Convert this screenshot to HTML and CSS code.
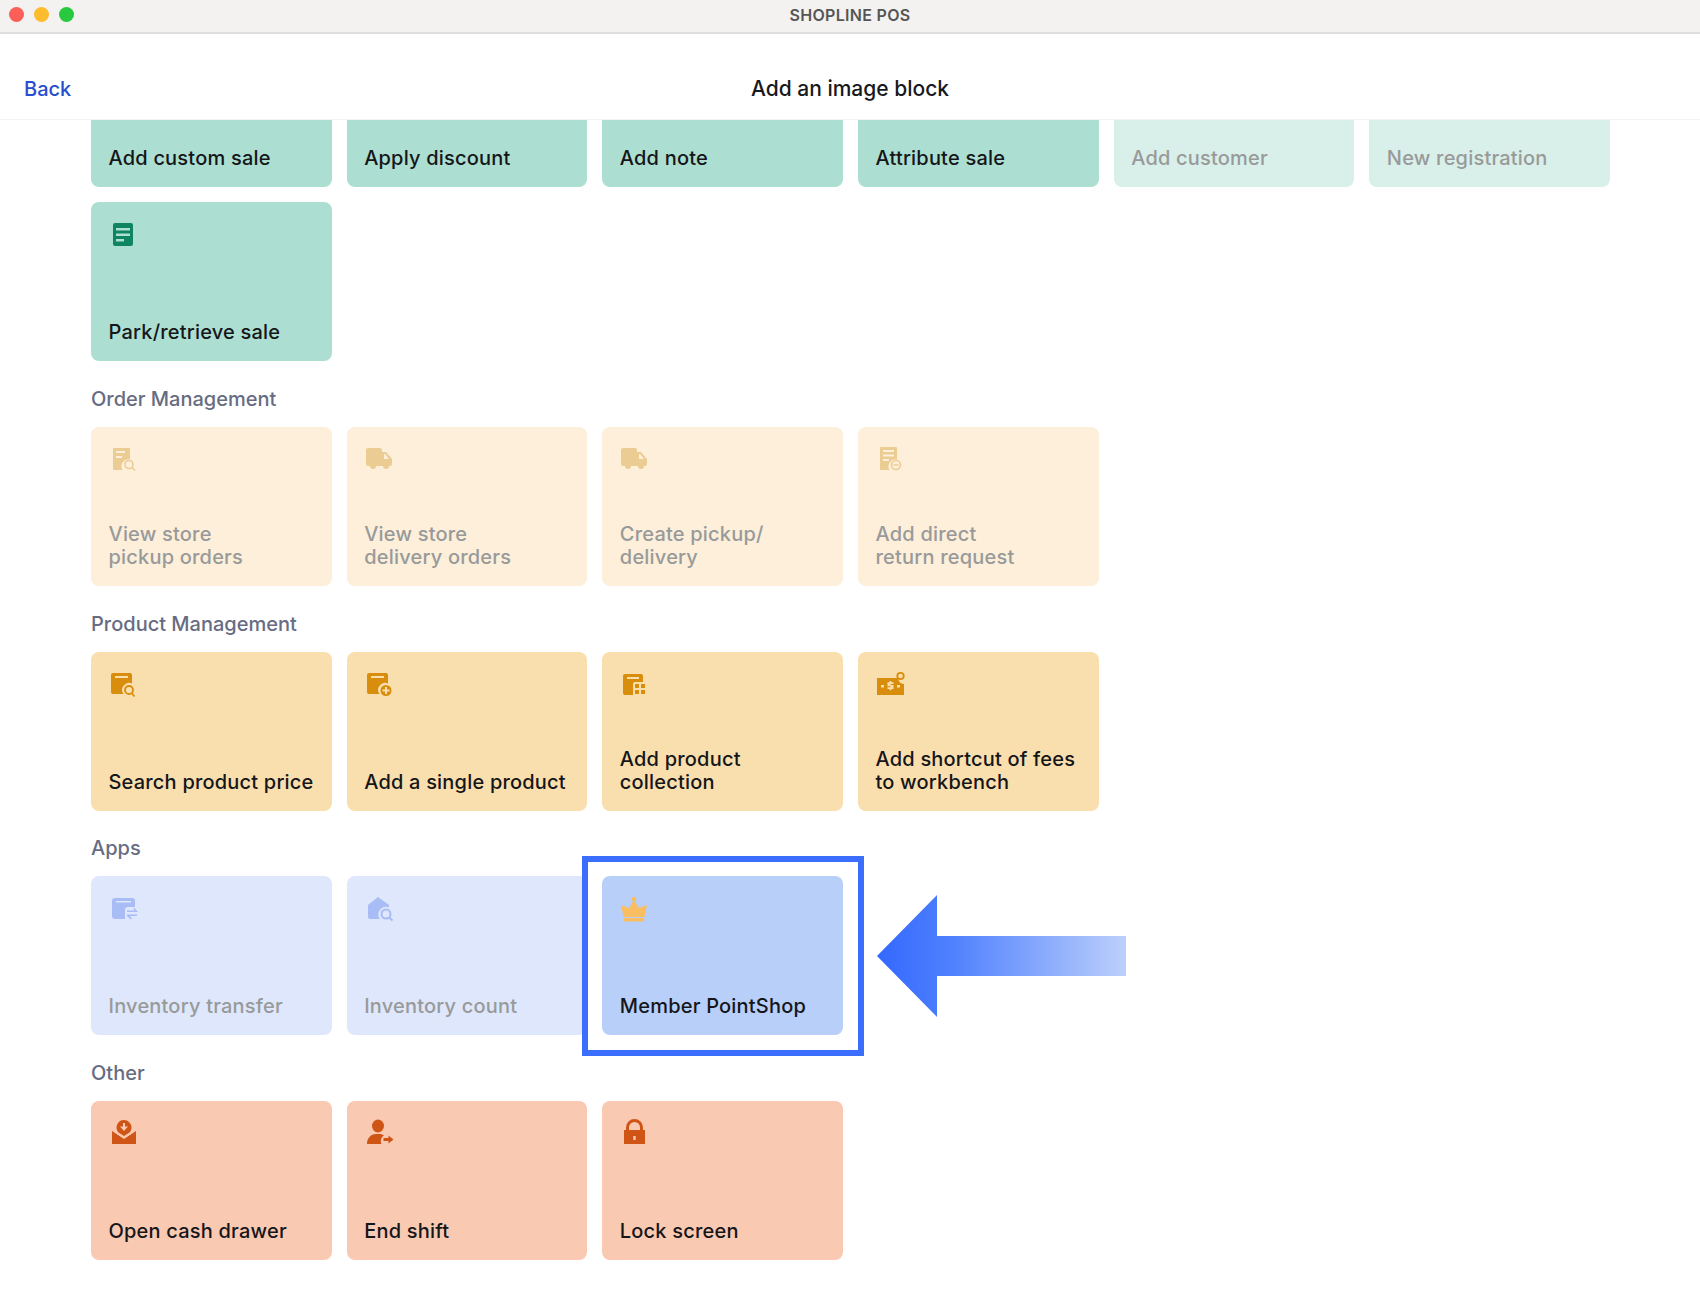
FILE: index.html
```html
<!DOCTYPE html>
<html lang="en">
<head>
<meta charset="utf-8">
<title>SHOPLINE POS</title>
<link rel="stylesheet" href="styles.css">
</head>
<body>
<div class="window">
  <div class="titlebar">
    <div class="lights"><span class="light red"></span><span class="light amber"></span><span class="light green"></span></div>
    <div class="app-name">SHOPLINE POS</div>
    <div></div>
  </div>
  <header class="nav">
    <a class="back">Back</a>
    <h1 class="nav-title">Add an image block</h1>
    <div></div>
  </header>
  <main class="scroller">
    <div class="content">
      <section class="group first">
        <div class="grid">
          <div class="card teal"><span class="text">Add custom sale</span></div>
          <div class="card teal"><span class="text">Apply discount</span></div>
          <div class="card teal"><span class="text">Add note</span></div>
          <div class="card teal"><span class="text">Attribute sale</span></div>
          <div class="card teal off"><span class="text">Add customer</span></div>
          <div class="card teal off"><span class="text">New registration</span></div>
          <div class="card teal">
            <svg class="icon" viewBox="0 0 32 32"><path fill-rule="evenodd" d="M7 5h16a2 2 0 0 1 2 2v19a2 2 0 0 1-2 2H7a2 2 0 0 1-2-2V7a2 2 0 0 1 2-2zm1 5v2.500h14V10zm0 5.500V18h14v-2.500zm0 5.500v2.500h8V21z"/></svg>
            <span class="text">Park/retrieve sale</span>
          </div>
        </div>
      </section>

      <section class="group">
        <h2 class="label">Order Management</h2>
        <div class="grid">
          <div class="card cream off">
            <svg class="icon" viewBox="0 0 32 32"><path fill-rule="evenodd" d="M6 5h15a1 1 0 0 1 1 1v10.500a7 7 0 0 0-7.500 10.500H6a1 1 0 0 1-1-1V6a1 1 0 0 1 1-1zm2 3v2h9V8zm0 5v2h6v-2z"/><path fill="none" stroke="currentColor" stroke-width="1.600" d="M21 17.500a4 4 0 1 1 0 8 4 4 0 0 1 0-8zm3 7 3 3"/></svg>
            <span class="text">View store<br>pickup orders</span>
          </div>
          <div class="card cream off">
            <svg class="icon" viewBox="0 0 32 32"><path d="M4 5h12a2 2 0 0 1 2 2v2h4l6 7v5a2 2 0 0 1-2 2h-1a3 3 0 0 1-6 0h-7a3 3 0 0 1-6 0H4a2 2 0 0 1-2-2V7a2 2 0 0 1 2-2z"/><path class="cut" d="M20 11v5h5l-4-5z"/></svg>
            <span class="text">View store<br>delivery orders</span>
          </div>
          <div class="card cream off">
            <svg class="icon" viewBox="0 0 32 32"><path d="M4 5h12a2 2 0 0 1 2 2v2h4l6 7v5a2 2 0 0 1-2 2h-1a3 3 0 0 1-6 0h-7a3 3 0 0 1-6 0H4a2 2 0 0 1-2-2V7a2 2 0 0 1 2-2z"/><path class="cut" d="M20 11v5h5l-4-5z"/></svg>
            <span class="text">Create pickup/<br>delivery</span>
          </div>
          <div class="card cream off">
            <svg class="icon" viewBox="0 0 32 32"><path fill-rule="evenodd" d="M6 4h15a1 1 0 0 1 1 1v11.500a7 7 0 0 0-7.500 10.500H6a1 1 0 0 1-1-1V5a1 1 0 0 1 1-1zm2 3v2h11V7zm0 4.500v2h11v-2zM8 16v2h6v-2z"/><circle cx="21" cy="22" r="4.500" fill="none" stroke="currentColor" stroke-width="1.600"/><path d="M18.500 21.200h5v1.500h-5z"/></svg>
            <span class="text">Add direct<br>return request</span>
          </div>
        </div>
      </section>

      <section class="group">
        <h2 class="label">Product Management</h2>
        <div class="grid">
          <div class="card amber-card">
            <svg class="icon" viewBox="0 0 32 32"><path fill-rule="evenodd" d="M5 5h17a2 2 0 0 1 2 2v8.500a7 7 0 0 0-8.500 10.500H5a2 2 0 0 1-2-2V7a2 2 0 0 1 2-2zm2 3v2h13V8z"/><path fill="none" stroke="currentColor" stroke-width="1.800" d="M21 18a4 4 0 1 1 0 8 4 4 0 0 1 0-8zm3 7.500 2.500 3"/></svg>
            <span class="text">Search product price</span>
          </div>
          <div class="card amber-card">
            <svg class="icon" viewBox="0 0 32 32"><path fill-rule="evenodd" d="M5 5h17a2 2 0 0 1 2 2v8.500a7 7 0 0 0-8.500 10.500H5a2 2 0 0 1-2-2V7a2 2 0 0 1 2-2zm2 3v2h13V8z"/><circle cx="22" cy="22.500" r="5.500"/><path class="cut" d="M21 19h2v2.500h2.500v2H23V26h-2v-2.500h-2.500v-2H21z"/></svg>
            <span class="text">Add a single product</span>
          </div>
          <div class="card amber-card">
            <svg class="icon" viewBox="0 0 32 32"><path fill-rule="evenodd" d="M6 6h16a2 2 0 0 1 2 2v6h-8a2 2 0 0 0-2 2v11H6a2 2 0 0 1-2-2V8a2 2 0 0 1 2-2zm2 3v2h12V9z"/><path d="M16 16h4v4h-4zm6 0h4v4h-4zm-6 6h4v4h-4zm6 0h4v4h-4z"/></svg>
            <span class="text">Add product<br>collection</span>
          </div>
          <div class="card amber-card">
            <svg class="icon" viewBox="0 0 32 32"><path d="M2 10h21a6 6 0 0 0 6 6v11H2z"/><circle cx="25.500" cy="8" r="3.200" fill="none" stroke="currentColor" stroke-width="1.800"/><path class="cut" d="M6 17h3v2.500H6zm16 0h3v2.500h-3zM14.700 13h1.600v1.300h2.200v1.600h-3v1h3v4h-2.200v1.400h-1.600v-1.400h-2.200v-1.600h3v-1h-3v-4h2.200z"/></svg>
            <span class="text">Add shortcut of fees<br>to workbench</span>
          </div>
        </div>
      </section>

      <section class="group">
        <h2 class="label">Apps</h2>
        <div class="grid">
          <div class="card blue off">
            <svg class="icon" viewBox="0 0 32 32"><path fill-rule="evenodd" d="M7 6h17a3 3 0 0 1 3 3v6h-7a3 3 0 0 0-3 3v9H7a3 3 0 0 1-3-3V9a3 3 0 0 1 3-3zm1 3v1.600h15V9z"/><path d="M19 18.500h8l-1.800-1.800 1-1 3.800 4.300H19zm10 4h-10v1.500l3.800 3.500 1-1-1.800-2.500h7z"/></svg>
            <span class="text">Inventory transfer</span>
          </div>
          <div class="card blue off">
            <svg class="icon" viewBox="0 0 32 32"><path d="M14 5l11 8v2.500a7.500 7.500 0 0 0-9 11.500H6a2 2 0 0 1-2-2V13z"/><path fill="none" stroke="currentColor" stroke-width="2" d="M22 17.500a4.500 4.500 0 1 1 0 9 4.500 4.500 0 0 1 0-9zm3.300 8 3.200 3"/></svg>
            <span class="text">Inventory count</span>
          </div>
          <div class="card blue on">
            <span class="highlight"></span>
            <svg class="icon crown" viewBox="0 0 32 32"><circle cx="15" cy="7" r="2.300"/><path d="M15 8l5 8 8-3-2.600 12H4.600L2 13l8 3z"/><path d="M5 26h20v3.500H5z"/></svg>
            <span class="text">Member PointShop</span>
            <svg class="arrow" viewBox="0 0 249 122" aria-hidden="true">
              <defs>
                <linearGradient id="arrow-fill" x1="0" x2="1" y1="0" y2="0">
                  <stop offset="0" stop-color="#3468fd"/>
                  <stop offset=".3" stop-color="#4f80fe"/>
                  <stop offset=".7" stop-color="#8eaefc"/>
                  <stop offset="1" stop-color="#bcd0fb"/>
                </linearGradient>
              </defs>
              <path fill="url(#arrow-fill)" d="M0 61 60 0v41h189v40H60v41z"/>
            </svg>
          </div>
        </div>
      </section>

      <section class="group">
        <h2 class="label">Other</h2>
        <div class="grid">
          <div class="card coral">
            <svg class="icon" viewBox="0 0 32 32"><path fill-rule="evenodd" d="M16 3a7.500 7.500 0 0 1 7.500 7.500c0 1.800-.6 3.400-1.700 4.700L16 19l-5.800-3.800a7.500 7.500 0 0 1 5.800-12.200zm-1 3v3.500h-3l4 4.500 4-4.500h-3V6z"/><path d="M4 14l12 8 12-8v13H4z"/></svg>
            <span class="text">Open cash drawer</span>
          </div>
          <div class="card coral">
            <svg class="icon" viewBox="0 0 32 32"><ellipse cx="14" cy="9" rx="6" ry="6.500"/><path d="M3 27c0-5.500 3.500-10 9-10h4c1.500 0 3 .6 4 1.500a6.500 6.500 0 0 0-2.500 8.500z"/><path d="M19.500 21h5v-2.500l5 4-5 4V24h-5z"/></svg>
            <span class="text">End shift</span>
          </div>
          <div class="card coral">
            <svg class="icon" viewBox="0 0 32 32"><path fill-rule="evenodd" d="M7 13v-2.500a8.500 8.500 0 0 1 17 0V13h2v14H5V13zm3 0h11v-2.500a5.500 5.500 0 0 0-11 0zm4.300 6v4h2.400v-4z"/></svg>
            <span class="text">Lock screen</span>
          </div>
        </div>
      </section>
    </div>
  </main>
</div>
</body>
</html>
```
FILE: styles.css
```css
* { box-sizing: border-box; }
html, body { margin: 0; height: 100%; background: #fff; }
body { font-family: Inter, "Noto Sans", sans-serif; color: #15161a; overflow: hidden; }

.window { height: 1305px; display: flex; flex-direction: column; }

.titlebar {
  flex: none;
  height: 34px;
  padding-bottom: 3px;
  display: grid;
  grid-template-columns: 1fr auto 1fr;
  align-items: center;
  background: #f3f2f0;
  border-bottom: 2px solid #dfdedf;
}
.lights { display: flex; gap: 10px; padding-left: 9px; }
.light { width: 15px; height: 15px; border-radius: 50%; }
.light.red { background: #fb5f57; }
.light.amber { background: #fdbb2e; }
.light.green { background: #28c83f; }
.app-name { font-size: 16px; font-weight: 600; color: #555; letter-spacing: .3px; }

.nav {
  flex: none;
  height: 86px;
  display: grid;
  grid-template-columns: 1fr auto 1fr;
  align-items: center;
  padding: 24px 24px 0;
  border-bottom: 1px solid #f3f3f3;
}
.back { color: #2a4dd0; font-size: 20px; font-weight: 500; }
.nav-title { margin: 0; font-size: 21px; font-weight: 500; color: #18191d; }

.scroller { flex: 1; min-height: 0; overflow: hidden; }
.content { margin-top: -92px; padding: 0 90px 0 91px; }

.group { padding-top: 25.75px; }
.group.first { padding-top: 0; }
.label { margin: 0 0 16px; height: 24px; line-height: 24px; font-size: 20px; font-weight: 500; color: #676c82; }

.grid { display: grid; grid-template-columns: repeat(6, 1fr); gap: 15px; }

.card {
  position: relative;
  height: 159px;
  padding: 16px 17px 17px 17.500px;
  border-radius: 8px;
  display: flex;
  flex-direction: column;
  font-size: 20px;
  font-weight: 500;
  line-height: 23px;
  letter-spacing: .2px;
}
.text { margin-top: auto; white-space: nowrap; }
.icon { width: 32px; height: 32px; fill: currentColor; flex: none; margin-left: -.5px; }

.teal { background: #acdfd1; }
.teal .icon { color: #0e8560; }
.teal .cut { fill: #acdfd1; }
.teal.off { background: #d9efe9; }

.cream { background: #fdefda; }
.cream .icon { color: #ebcd94; }
.cream .cut { fill: #fdefda; }

.amber-card { background: #fadfae; }
.amber-card .icon { color: #d98d0d; }
.amber-card .cut { fill: #fadfae; }

.blue { background: #dee7fb; }
.blue .icon { color: #a8bcf6; }
.blue.on { background: #b8cff9; }
.blue .icon.crown { color: #f9bd62; }

.coral { background: #fac9b2; }
.coral .icon { color: #cf5517; }

.off .text { color: #989a9a; }

.highlight {
  position: absolute;
  left: -20px;
  right: -21px;
  top: -20px;
  bottom: -21px;
  border: 6px solid #3b6eff;
}
.arrow {
  position: absolute;
  left: 275px;
  top: 19px;
  width: 249px;
  height: 122px;
}
```
